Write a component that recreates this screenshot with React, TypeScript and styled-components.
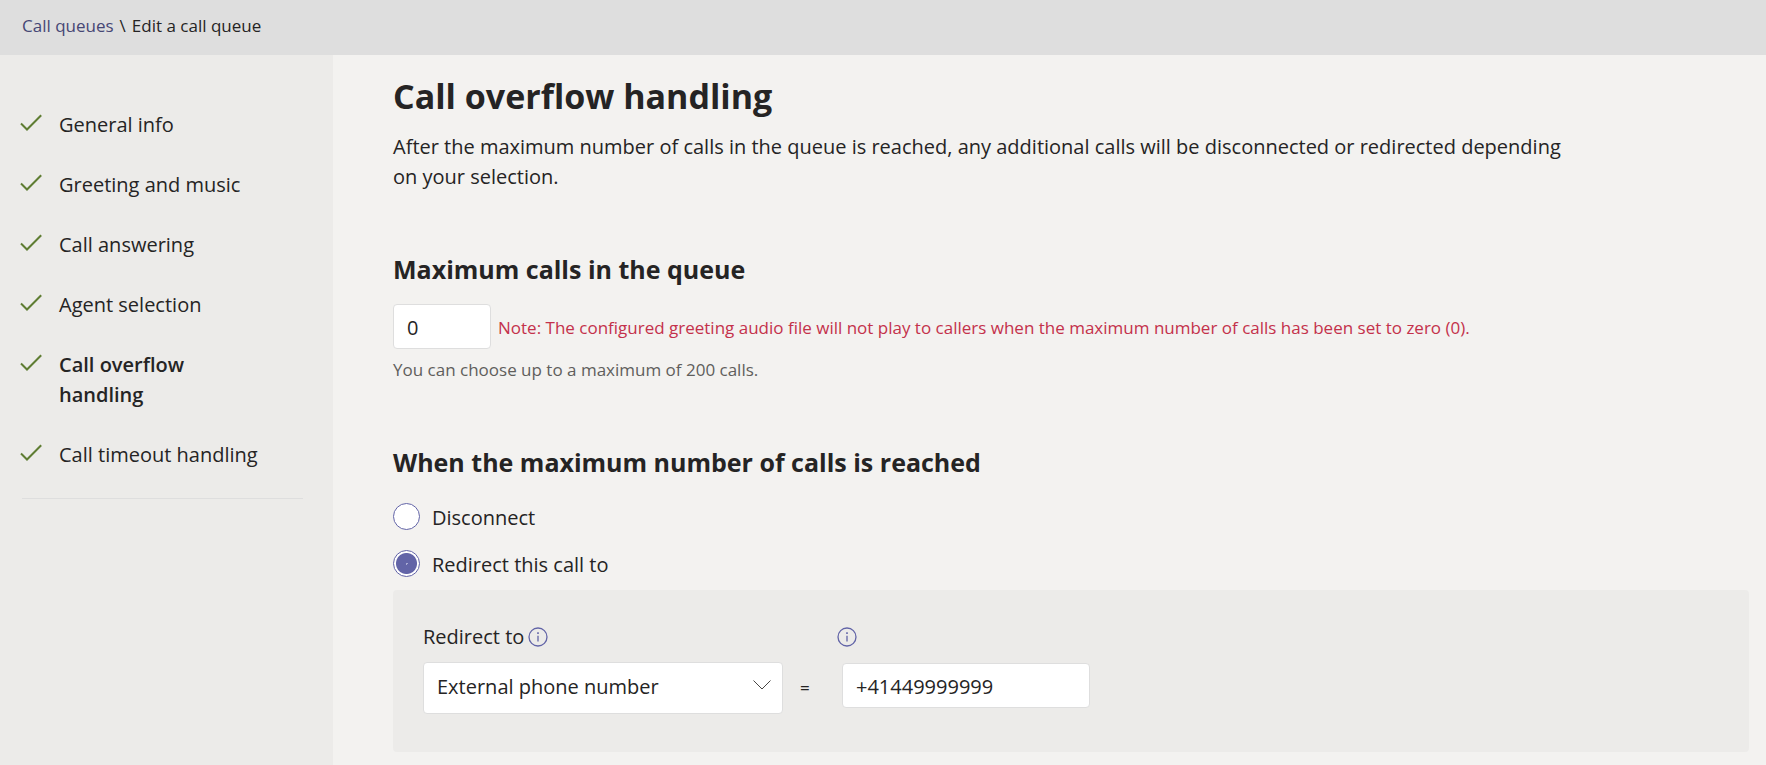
import React, { useState } from "react";
import styled, { createGlobalStyle } from "styled-components";

const GlobalStyle = createGlobalStyle`
  *, *::before, *::after { box-sizing: border-box; }
  body {
    margin: 0;
    background: #f3f2f0;
    color: #252424;
    font-family: "Segoe UI", "Open Sans", "Noto Sans", sans-serif;
    font-size: 20px;
    line-height: 30px;
  }
  input, select, button { font: inherit; color: inherit; }
`;

const Page = styled.div`
  display: flex;
  flex-direction: column;
  min-height: 100vh;
`;

const TopBar = styled.nav`
  display: flex;
  gap: 6px;
  padding: 11px 22px 14px;
  background: #dedede;
  font-size: 17px;
`;

const CrumbLink = styled.a`
  color: #464775;
  text-decoration: none;
`;

const Body = styled.div`
  display: flex;
  flex: 1;
`;

const Sidebar = styled.aside`
  flex: 0 0 333px;
  padding: 40px 30px 0 20px;
  background: #ecebe9;
`;

const StepList = styled.ol`
  margin: 0;
  padding: 0 36px 13px 0;
  list-style: none;
`;

const Step = styled.li`
  padding: 15px 0;
`;

const StepLink = styled.a<{ $current?: boolean }>`
  display: flex;
  gap: 17px;
  color: inherit;
  text-decoration: none;
  font-weight: ${(p) => (p.$current ? 600 : 400)};
`;

const CheckMark = styled.svg`
  flex: none;
  width: 22px;
  height: 26px;
  fill: none;
  stroke: #5f7d33;
  stroke-width: 2;
`;

const Divider = styled.hr`
  margin: 0 0 0 2px;
  border: 0;
  border-top: 1px solid #dedede;
`;

const Main = styled.main`
  flex: 1;
  min-width: 0;
  padding: 17px 17px 12px 60px;
`;

const Title = styled.h1`
  margin: 0;
  font-size: 34px;
  line-height: 48px;
  font-weight: 700;
`;

const Description = styled.p`
  max-width: 1180px;
  margin: 12px 0 0;
`;

const Section = styled.section`
  margin-top: 59px;
`;

const SectionTitle = styled.h2`
  margin: 0 0 17px;
  font-size: 25px;
  line-height: 36px;
  font-weight: 700;
`;

const Row = styled.div`
  display: flex;
  align-items: center;
  gap: 7px;
`;

const TextField = styled.input<{ $width: number }>`
  width: ${(p) => p.$width}px;
  height: 45px;
  padding: 2px 13px 0;
  border: 1px solid #dedede;
  border-radius: 4px;
  background: #fff;
  outline: none;
`;

const Warning = styled.span`
  padding-top: 3px;
  color: #c4314b;
  font-size: 17px;
`;

const Hint = styled.p`
  margin: 6px 0 0;
  color: #605e5c;
  font-size: 17px;
`;

const Options = styled.fieldset`
  display: grid;
  gap: 16px;
  margin: 0;
  padding: 4px 0 11px;
  border: 0;
`;

const Option = styled.label`
  display: flex;
  align-items: center;
  gap: 12px;
  height: 31px;
`;

const OptionText = styled.span`
  padding-top: 2px;
`;

const Radio = styled.input`
  appearance: none;
  width: 27px;
  height: 27px;
  margin: 0;
  border: 1px solid #6264a7;
  border-radius: 50%;
  background: #fff;
  &:checked {
    background: radial-gradient(circle, #a9aad2 0 1px, #6264a7 1px 10px, #fff 11px);
  }
`;

const Panel = styled.div`
  display: grid;
  grid-template-columns: 360px 20px 1fr;
  column-gap: 17px;
  row-gap: 10px;
  padding: 31px 30px 38px;
  border-radius: 4px;
  background: #ecebe9;
`;

const FieldHead = styled.div`
  display: flex;
  align-items: center;
  gap: 4px;
  height: 31px;
`;

const InfoButton = styled.button`
  display: flex;
  padding: 0;
  border: 0;
  background: none;
  color: #6264a7;
`;

const SelectWrap = styled.div`
  display: grid;
  align-items: center;
  & > * { grid-area: 1 / 1; }
`;

const Select = styled.select`
  appearance: none;
  width: 100%;
  height: 52px;
  padding: 0 50px 3px 13px;
  border: 1px solid #dedede;
  border-radius: 4px;
  background: #fff;
  outline: none;
`;

const Chevron = styled.svg`
  justify-self: end;
  width: 18px;
  height: 10px;
  margin: 0 12px 6px 0;
  fill: none;
  stroke: #484644;
  pointer-events: none;
`;

const Equals = styled.span`
  font-size: 17px;
  line-height: 52px;
`;

const PhoneCell = styled.div`
  padding: 1px 0 0 5px;
`;

const InfoIcon = () => (
  <svg width="20" height="20" viewBox="0 0 20 20" fill="none" stroke="currentColor" aria-hidden="true">
    <circle cx="10" cy="10" r="9" strokeWidth="1.3" />
    <path d="M10 8.8v5.6" strokeWidth="1.3" />
    <path d="M10 5.2v1.8" strokeWidth="1.6" />
  </svg>
);

const steps = [
  "General info",
  "Greeting and music",
  "Call answering",
  "Agent selection",
  "Call overflow handling",
  "Call timeout handling",
];
const currentStep = "Call overflow handling";

export default function App() {
  const [limit, setLimit] = useState("0");
  const [action, setAction] = useState("redirect");
  const [phone, setPhone] = useState("+41449999999");

  return (
    <Page>
      <GlobalStyle />
      <TopBar aria-label="Breadcrumb">
        <CrumbLink href="#queues">Call queues</CrumbLink>
        <span>\</span>
        <span>Edit a call queue</span>
      </TopBar>
      <Body>
        <Sidebar>
          <StepList>
            {steps.map((step) => (
              <Step key={step}>
                <StepLink
                  href="#step"
                  $current={step === currentStep}
                  aria-current={step === currentStep ? "step" : undefined}
                >
                  <CheckMark viewBox="0 0 22 26" aria-hidden="true">
                    <path d="M1 13.5 7 19.5 21.2 5.2" />
                  </CheckMark>
                  <span>{step}</span>
                </StepLink>
              </Step>
            ))}
          </StepList>
          <Divider />
        </Sidebar>
        <Main>
          <Title>Call overflow handling</Title>
          <Description>
            After the maximum number of calls in the queue is reached, any additional calls will be
            disconnected or redirected depending on your selection.
          </Description>
          <Section>
            <SectionTitle id="max-calls">Maximum calls in the queue</SectionTitle>
            <Row>
              <TextField
                $width={98}
                aria-labelledby="max-calls"
                aria-describedby="max-hint"
                value={limit}
                onChange={(e) => setLimit(e.target.value)}
              />
              <Warning>
                Note: The configured greeting audio file will not play to callers when the maximum
                number of calls has been set to zero (0).
              </Warning>
            </Row>
            <Hint id="max-hint">You can choose up to a maximum of 200 calls.</Hint>
          </Section>
          <Section>
            <SectionTitle id="when-reached">When the maximum number of calls is reached</SectionTitle>
            <Options aria-labelledby="when-reached">
              <Option>
                <Radio
                  type="radio"
                  name="action"
                  checked={action === "disconnect"}
                  onChange={() => setAction("disconnect")}
                />
                <OptionText>Disconnect</OptionText>
              </Option>
              <Option>
                <Radio
                  type="radio"
                  name="action"
                  checked={action === "redirect"}
                  onChange={() => setAction("redirect")}
                />
                <OptionText>Redirect this call to</OptionText>
              </Option>
            </Options>
            <Panel>
              <FieldHead>
                <label htmlFor="target">Redirect to</label>
                <InfoButton type="button" aria-label="About redirect targets">
                  <InfoIcon />
                </InfoButton>
              </FieldHead>
              <span />
              <FieldHead>
                <InfoButton type="button" aria-label="About the phone number">
                  <InfoIcon />
                </InfoButton>
              </FieldHead>
              <SelectWrap>
                <Select id="target" defaultValue="phone">
                  <option value="phone">External phone number</option>
                </Select>
                <Chevron viewBox="0 0 18 10" aria-hidden="true">
                  <path d="M.5.5 9 9 17.5.5" />
                </Chevron>
              </SelectWrap>
              <Equals>=</Equals>
              <PhoneCell>
                <TextField
                  $width={248}
                  type="tel"
                  aria-label="External phone number"
                  value={phone}
                  onChange={(e) => setPhone(e.target.value)}
                />
              </PhoneCell>
            </Panel>
          </Section>
        </Main>
      </Body>
    </Page>
  );
}
